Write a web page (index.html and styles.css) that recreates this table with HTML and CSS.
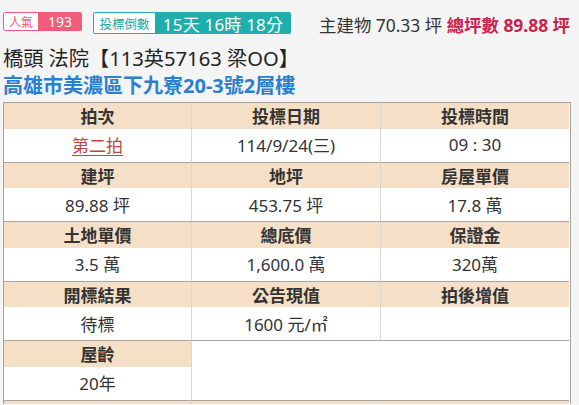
FILE: index.html
```html
<!DOCTYPE html>
<html lang="zh-Hant">
<head>
<meta charset="utf-8">
<link rel="stylesheet" href="styles.css">
</head>
<body>
<div class="page">
  <div class="topbar">
    <div class="badges">
      <span class="badge pop"><span class="lbl">人氣</span><span class="val">193</span></span>
      <span class="badge cd"><span class="lbl">投標倒數</span><span class="val">15天 16時 18分</span></span>
    </div>
    <div class="area">主建物 70.33 坪 <strong class="total">總坪數 89.88 坪</strong></div>
  </div>
  <h1 class="title">橋頭 法院【113英57163 梁OO】</h1>
  <h2 class="addr">高雄市美濃區下九寮20-3號2層樓</h2>
  <div class="tablewrap">
    <div class="grid">
      <div class="th">拍次</div><div class="th c">投標日期</div><div class="th c">投標時間</div>
      <div class="td"><a class="round" href="#">第二拍</a></div><div class="td c">114/9/24(三)</div><div class="td c">09 : 30</div>

      <div class="th">建坪</div><div class="th c">地坪</div><div class="th c">房屋單價</div>
      <div class="td">89.88 坪</div><div class="td c">453.75 坪</div><div class="td c">17.8 萬</div>

      <div class="th">土地單價</div><div class="th c">總底價</div><div class="th c">保證金</div>
      <div class="td">3.5 萬</div><div class="td c">1,600.0 萬</div><div class="td c">320萬</div>

      <div class="th">開標結果</div><div class="th c">公告現值</div><div class="th c">拍後增值</div>
      <div class="td">待標</div><div class="td c">1600 元/㎡</div><div class="td c"></div>

      <div class="th">屋齡</div><div class="blank c"></div>
      <div class="td">20年</div>

      <div class="th tail">&nbsp;</div><div class="th tail c">&nbsp;</div><div class="th tail c">&nbsp;</div>
    </div>
  </div>
</div>
</body>
</html>
```
FILE: styles.css
```css
* { box-sizing: border-box; }
html, body { margin: 0; padding: 0; }
body {
  background: #f4f4f4;
  font-family: "Noto Sans", "Noto Sans CJK TC", sans-serif;
  color: #333;
  width: 579px;
  height: 405px;
  overflow: hidden;
}
.page {
  padding: 12px 0 0 3px;
  width: 571px;
}
.topbar {
  display: flex;
  justify-content: space-between;
  align-items: center;
  height: 22px;
}
.badges {
  display: flex;
  align-items: flex-start;
  gap: 11px;
  height: 22px;
}
.badge {
  display: flex;
  border-radius: 2px;
  overflow: hidden;
}
.badge .lbl {
  background: #fff;
  display: flex;
  align-items: center;
  justify-content: center;
  border-radius: 2px 0 0 2px;
}
.badge .val {
  display: flex;
  align-items: center;
  justify-content: center;
  color: #fff;
}
.pop { height: 19px; }
.pop .lbl {
  width: 35px;
  border: 1px solid #f45c7c;
  border-right: 0;
  color: #f0577a;
  font-size: 12px;
}
.pop .val {
  width: 44px;
  background: #f45c7c;
  font-size: 14px;
}
.cd { height: 22px; }
.cd .lbl {
  width: 62px;
  border: 1px solid #20aeac;
  border-right: 0;
  color: #1ea5a3;
  font-size: 12.5px;
}
.cd .val {
  width: 136px;
  background: #20aeac;
  font-size: 17px;
  letter-spacing: 0.2px;
}
.area {
  font-size: 17.4px;
  color: #333;
  padding-right: 1px;
  line-height: 22px;
  padding-top: 3px;
}
.total {
  color: #c8234c;
  font-weight: bold;
}
.title {
  margin: 0;
  font-size: 20.2px;
  font-weight: normal;
  color: #222;
  line-height: 24px;
  margin-top: 12px;
}
.addr {
  margin: 0;
  font-size: 20px;
  font-weight: bold;
  color: #2a80d0;
  line-height: 26px;
  padding-top: 3px;
}
.tablewrap {
  margin-top: 3px;
  width: 568px;
  border: 1px solid #a6a29c;
  border-bottom: 0;
  background: #fff;
  padding-right: 1px;
}
.grid {
  display: grid;
  grid-template-columns: 187px 189px 189px;
  font-size: 17px;
}
.th, .td, .blank {
  display: flex;
  align-items: center;
  justify-content: center;
}
.th {
  height: 25.5px;
  background: #f5dfc7;
  font-weight: bold;
  color: #333;
}
.th.tail { height: 3px; overflow: hidden; }
.td {
  height: 34px;
  padding-bottom: 1px;
  border-bottom: 1px solid #aaa59e;
  background: #fff;
  color: #333;
}
.c { border-left: 1px solid #ddd6ce; }
.blank {
  grid-column: span 2;
  grid-row: span 2;
  background: #fff;
  border-left: 1px solid #ddd6ce;
  border-bottom: 1px solid #aaa59e;
}
.round {
  color: #c0453f;
  text-decoration: underline;
  text-underline-offset: 3px;
}
```
